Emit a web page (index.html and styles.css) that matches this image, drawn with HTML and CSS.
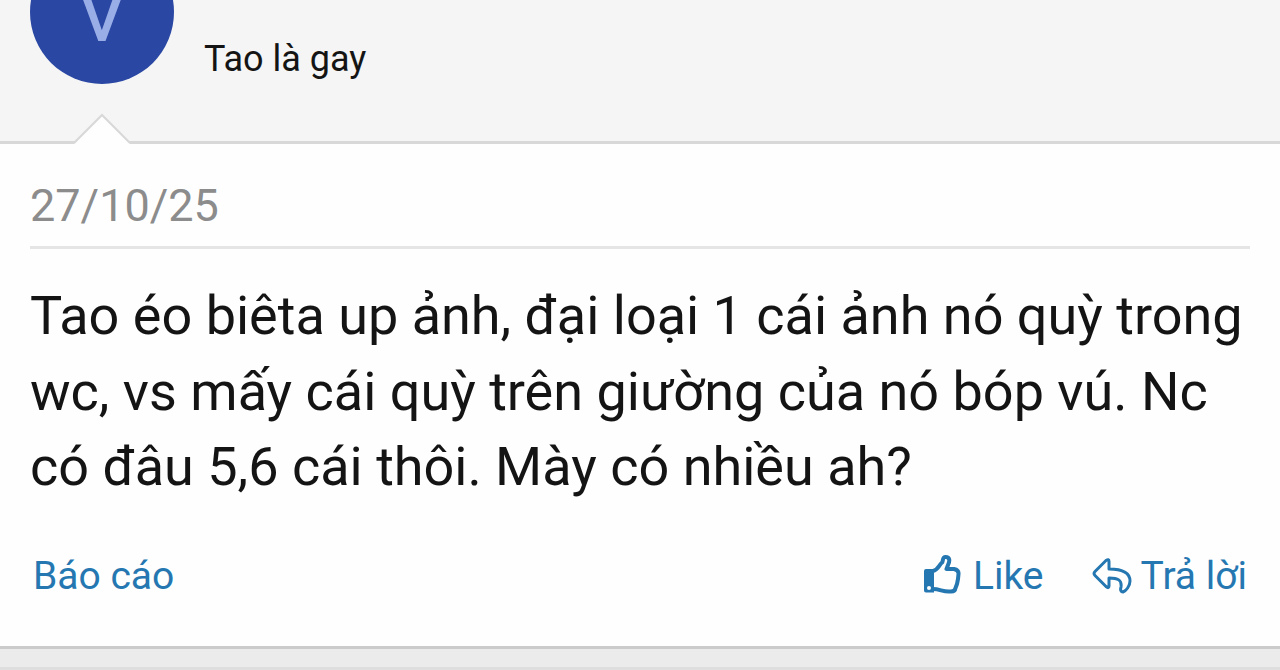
FILE: index.html
```html
<!DOCTYPE html>
<html lang="vi">
<head>
<meta charset="utf-8">
<meta name="viewport" content="width=device-width, initial-scale=1">
<title>27/10/25</title>
<link rel="stylesheet" href="styles.css">
</head>
<body>
<article class="post">
  <header class="user">
    <a class="avatar" href="#">V</a>
    <p class="user-title">Tao là gay</p>
    <svg class="arrow" viewBox="0 0 60 32" aria-hidden="true"><path class="arrow-fill" d="M2 32 30 4 58 32Z"/><path class="arrow-line" d="M2 31 30 3 58 31"/></svg>
  </header>
  <div class="main">
    <div class="date"><time datetime="2025-10-27">27/10/25</time></div>
    <p class="content">Tao éo biêta up ảnh, đại loại 1 cái ảnh nó quỳ trong wc, vs mấy cái quỳ trên giường của nó bóp vú. Nc có đâu 5,6 cái thôi. Mày có nhiều ah?</p>
    <footer class="actions">
      <a class="action report" href="#">Báo cáo</a>
      <a class="action" href="#"><svg class="icon like" viewBox="0 0 39 39" aria-hidden="true"><path class="solid" fill-rule="evenodd" d="M3 14H11V37.500H3Q1 37.500 1 35.500V16Q1 14 3 14ZM6 31A2 2 0 1 0 6 35A2 2 0 1 0 6 31Z"/><path class="stroke like-stroke" d="M10 16C15 15 16 10 19 7.500C20.500 6 19 2 22.500 2C27 2 27 6 25 10L23.500 14H31Q36 15 35.500 19L35 24L34 29L32.500 33Q32 37 27 36.500C20 37 17 34 10 34"/></svg>Like</a>
      <a class="action" href="#"><svg class="icon reply" viewBox="0 0 40 36" aria-hidden="true"><path class="stroke" d="M17 11V3.500Q17 0.500 14 2.500L3 13.500Q1 15.500 3 17.500L14 28.500Q17 31 17 28V20C26 20 30 22 29 29C28 32 29 34 31 34C34 33 38 28 38 23C38 13 28 11 17 11Z"/></svg>Trả lời</a>
    </footer>
  </div>
</article>
<div class="next-post"></div>
</body>
</html>
```
FILE: styles.css
```css
body { margin: 0; background: #ebebeb; color: #141414; font-family: Roboto, "Noto Sans", sans-serif; }
a { color: #2577b1; text-decoration: none; }
.post { background: #fefefe; border-bottom: 3px solid #cbcbcb; }
.user { position: relative; display: flex; align-items: center; height: 141px; background: #f5f5f5; border-bottom: 3px solid #d8d8d8; gap: 30px; padding: 0 30px; }
.avatar { align-self: flex-start; width: 144px; height: 144px; margin-top: -60px; border-radius: 50%; background: #2947a3; color: #99ade6; font-size: 86px; line-height: 144px; text-align: center; }
.user-title { margin: 0 0 24px; font-size: 36px; line-height: 50px; }
.arrow { position: absolute; left: 72px; bottom: -3px; width: 60px; height: 32px; }
.arrow-fill { fill: #fefefe; }
.arrow-line { fill: none; stroke: #d8d8d8; stroke-width: 2; }
.main { padding: 30px; }
.date { border-bottom: 3px solid #e5e5e5; color: #8c8c8c; font-size: 45px; line-height: 63px; padding-bottom: 9px; }
.content { margin: 29px 0 0; font-size: 54px; line-height: 1.4; }
.actions { display: flex; align-items: center; gap: 48px; margin-top: 34px; padding: 10px 3px 13px; }
.action { display: flex; align-items: center; gap: 9px; font-size: 39px; line-height: 54px; }
.report { margin-right: auto; }
.icon { display: block; }
.like { width: 39px; height: 39px; margin: 0 2px 2px 0; }
.reply { width: 40px; height: 36px; }
.solid { fill: currentColor; }
.stroke { fill: none; stroke: currentColor; stroke-width: 3; stroke-linejoin: round; }
.like-stroke { stroke-width: 4; }
.next-post { height: 18px; border-bottom: 3px solid #dedede; }
```
